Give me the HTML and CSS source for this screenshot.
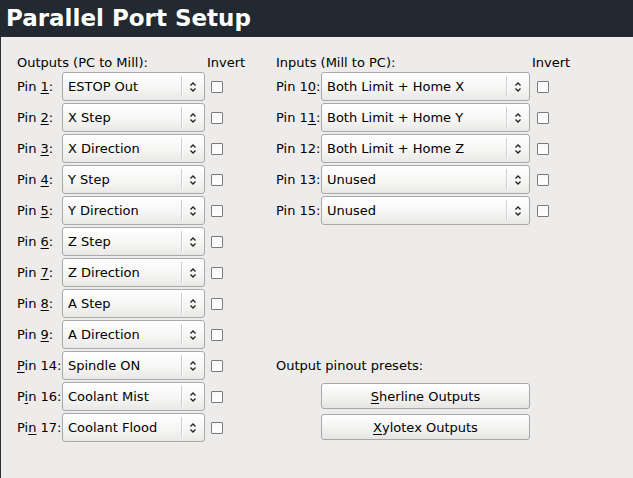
FILE: index.html
```html
<!DOCTYPE html>
<html>
<head>
<meta charset="utf-8">
<link rel="stylesheet" href="styles.css">
</head>
<body>
<div class="titlebar"><h1 class="title">Parallel Port Setup</h1></div>
<div class="panel">
  <div class="section outputs">
    <div class="head head-main">Outputs (PC to Mill):</div>
    <div class="head head-inv">Invert</div>

    <div class="lbl">Pin <u>1</u>:</div><div class="combo"><span class="val">ESTOP Out</span><span class="sep"></span><svg class="arr" viewBox="0 0 8 12"><path d="M1.5 4.5 L4 2 L6.5 4.5 M1.5 7.5 L4 10 L6.5 7.5"/></svg></div><div class="chk"></div>
    <div class="lbl">Pin <u>2</u>:</div><div class="combo"><span class="val">X Step</span><span class="sep"></span><svg class="arr" viewBox="0 0 8 12"><path d="M1.5 4.5 L4 2 L6.5 4.5 M1.5 7.5 L4 10 L6.5 7.5"/></svg></div><div class="chk"></div>
    <div class="lbl">Pin <u>3</u>:</div><div class="combo"><span class="val">X Direction</span><span class="sep"></span><svg class="arr" viewBox="0 0 8 12"><path d="M1.5 4.5 L4 2 L6.5 4.5 M1.5 7.5 L4 10 L6.5 7.5"/></svg></div><div class="chk"></div>
    <div class="lbl">Pin <u>4</u>:</div><div class="combo"><span class="val">Y Step</span><span class="sep"></span><svg class="arr" viewBox="0 0 8 12"><path d="M1.5 4.5 L4 2 L6.5 4.5 M1.5 7.5 L4 10 L6.5 7.5"/></svg></div><div class="chk"></div>
    <div class="lbl">Pin <u>5</u>:</div><div class="combo"><span class="val">Y Direction</span><span class="sep"></span><svg class="arr" viewBox="0 0 8 12"><path d="M1.5 4.5 L4 2 L6.5 4.5 M1.5 7.5 L4 10 L6.5 7.5"/></svg></div><div class="chk"></div>
    <div class="lbl">Pin <u>6</u>:</div><div class="combo"><span class="val">Z Step</span><span class="sep"></span><svg class="arr" viewBox="0 0 8 12"><path d="M1.5 4.5 L4 2 L6.5 4.5 M1.5 7.5 L4 10 L6.5 7.5"/></svg></div><div class="chk"></div>
    <div class="lbl">Pin <u>7</u>:</div><div class="combo"><span class="val">Z Direction</span><span class="sep"></span><svg class="arr" viewBox="0 0 8 12"><path d="M1.5 4.5 L4 2 L6.5 4.5 M1.5 7.5 L4 10 L6.5 7.5"/></svg></div><div class="chk"></div>
    <div class="lbl">Pin <u>8</u>:</div><div class="combo"><span class="val">A Step</span><span class="sep"></span><svg class="arr" viewBox="0 0 8 12"><path d="M1.5 4.5 L4 2 L6.5 4.5 M1.5 7.5 L4 10 L6.5 7.5"/></svg></div><div class="chk"></div>
    <div class="lbl">Pin <u>9</u>:</div><div class="combo"><span class="val">A Direction</span><span class="sep"></span><svg class="arr" viewBox="0 0 8 12"><path d="M1.5 4.5 L4 2 L6.5 4.5 M1.5 7.5 L4 10 L6.5 7.5"/></svg></div><div class="chk"></div>
    <div class="lbl"><u>P</u>in 14:</div><div class="combo"><span class="val">Spindle ON</span><span class="sep"></span><svg class="arr" viewBox="0 0 8 12"><path d="M1.5 4.5 L4 2 L6.5 4.5 M1.5 7.5 L4 10 L6.5 7.5"/></svg></div><div class="chk"></div>
    <div class="lbl">P<u>i</u>n 16:</div><div class="combo"><span class="val">Coolant Mist</span><span class="sep"></span><svg class="arr" viewBox="0 0 8 12"><path d="M1.5 4.5 L4 2 L6.5 4.5 M1.5 7.5 L4 10 L6.5 7.5"/></svg></div><div class="chk"></div>
    <div class="lbl">Pi<u>n</u> 17:</div><div class="combo"><span class="val">Coolant Flood</span><span class="sep"></span><svg class="arr" viewBox="0 0 8 12"><path d="M1.5 4.5 L4 2 L6.5 4.5 M1.5 7.5 L4 10 L6.5 7.5"/></svg></div><div class="chk"></div>
  </div>

  <div class="section inputs">
    <div class="head head-main">Inputs (Mill to PC):</div>
    <div class="head head-inv">Invert</div>

    <div class="lbl">Pin 1<u>0</u>:</div><div class="combo"><span class="val">Both Limit + Home X</span><span class="sep"></span><svg class="arr" viewBox="0 0 8 12"><path d="M1.5 4.5 L4 2 L6.5 4.5 M1.5 7.5 L4 10 L6.5 7.5"/></svg></div><div class="chk"></div>
    <div class="lbl">Pin 1<u>1</u>:</div><div class="combo"><span class="val">Both Limit + Home Y</span><span class="sep"></span><svg class="arr" viewBox="0 0 8 12"><path d="M1.5 4.5 L4 2 L6.5 4.5 M1.5 7.5 L4 10 L6.5 7.5"/></svg></div><div class="chk"></div>
    <div class="lbl">Pin 12:</div><div class="combo"><span class="val">Both Limit + Home Z</span><span class="sep"></span><svg class="arr" viewBox="0 0 8 12"><path d="M1.5 4.5 L4 2 L6.5 4.5 M1.5 7.5 L4 10 L6.5 7.5"/></svg></div><div class="chk"></div>
    <div class="lbl">Pin 13:</div><div class="combo"><span class="val">Unused</span><span class="sep"></span><svg class="arr" viewBox="0 0 8 12"><path d="M1.5 4.5 L4 2 L6.5 4.5 M1.5 7.5 L4 10 L6.5 7.5"/></svg></div><div class="chk"></div>
    <div class="lbl">Pin 15:</div><div class="combo"><span class="val">Unused</span><span class="sep"></span><svg class="arr" viewBox="0 0 8 12"><path d="M1.5 4.5 L4 2 L6.5 4.5 M1.5 7.5 L4 10 L6.5 7.5"/></svg></div><div class="chk"></div>

    <div class="presets-label">Output pinout presets:</div>
    <button class="btn btn-1"><u>S</u>herline Outputs</button>
    <button class="btn btn-2"><u>X</u>ylotex Outputs</button>
  </div>
</div>
</body>
</html>
```

FILE: styles.css
```css
* { box-sizing: border-box; }
html, body {
  margin: 0;
  padding: 0;
  width: 633px;
  height: 478px;
  overflow: hidden;
  background: #edeceb;
  font-family: "DejaVu Sans", "Liberation Sans", sans-serif;
  font-size: 13px;
  color: #000;
}
.titlebar {
  height: 37px;
  background: #232931;
  display: flex;
  align-items: center;
  padding-left: 6px;
}
.title {
  margin: 0;
  color: #fff;
  font-size: 23px;
  font-weight: bold;
  line-height: 1;
}
.panel {
  height: 441px;
  border-left: 1px solid #2a2f36;
  display: flex;
  padding: 13px 0 0 16px;
  gap: 53px;
}
.section {
  display: grid;
  grid-template-rows: 20px repeat(12, 29px);
  row-gap: 2px;
  align-items: center;
}
.outputs { grid-template-columns: 45px 143px 18px; }
.inputs { grid-template-columns: 45px 209px 19px; }
.outputs .chk { margin-left: 6px; }
.inputs .chk { margin-left: 7px; }

.head { white-space: nowrap; line-height: 15px; align-self: end; }
.head-main { grid-column: 1 / 3; }
.head-inv { grid-column: 3; margin-left: 2px; }

.lbl { white-space: nowrap; }
.lbl u, .btn u { text-decoration-thickness: 1px; text-underline-offset: 2px; }

.combo {
  height: 29px;
  border: 1px solid #a9a9a9;
  border-radius: 3px;
  background: linear-gradient(#ffffff, #f6f6f5 55%, #e9e8e7);
  display: flex;
  align-items: center;
  padding-left: 5px;
}
.val { flex: 1; white-space: nowrap; overflow: hidden; }
.sep {
  width: 1px;
  height: 21px;
  background: #cfcfcf;
  box-shadow: 1px 0 0 #ffffff;
}
.arr {
  width: 8px;
  height: 12px;
  margin: 0 7px 0 7px;
  fill: none;
  stroke: #222;
  stroke-width: 1.3;
}
.chk {
  width: 12px;
  height: 12px;
  border: 1px solid #7b7b7b;
  border-radius: 1px;
  background: linear-gradient(#f8f8f8, #ffffff);
}

.presets-label {
  grid-row: 11;
  grid-column: 1 / 4;
  white-space: nowrap;
}
.btn {
  grid-column: 2;
  height: 26px;
  margin: 0;
  font: inherit;
  color: #000;
  border: 1px solid #a7a7a7;
  border-radius: 3px;
  background: linear-gradient(#ffffff, #f3f3f2 55%, #e6e5e4);
  padding: 0;
  text-align: center;
}
.btn-1 { grid-row: 12; align-self: start; margin-top: 1px; }
.btn-2 { grid-row: 13; align-self: start; margin-top: 1px; }
```
